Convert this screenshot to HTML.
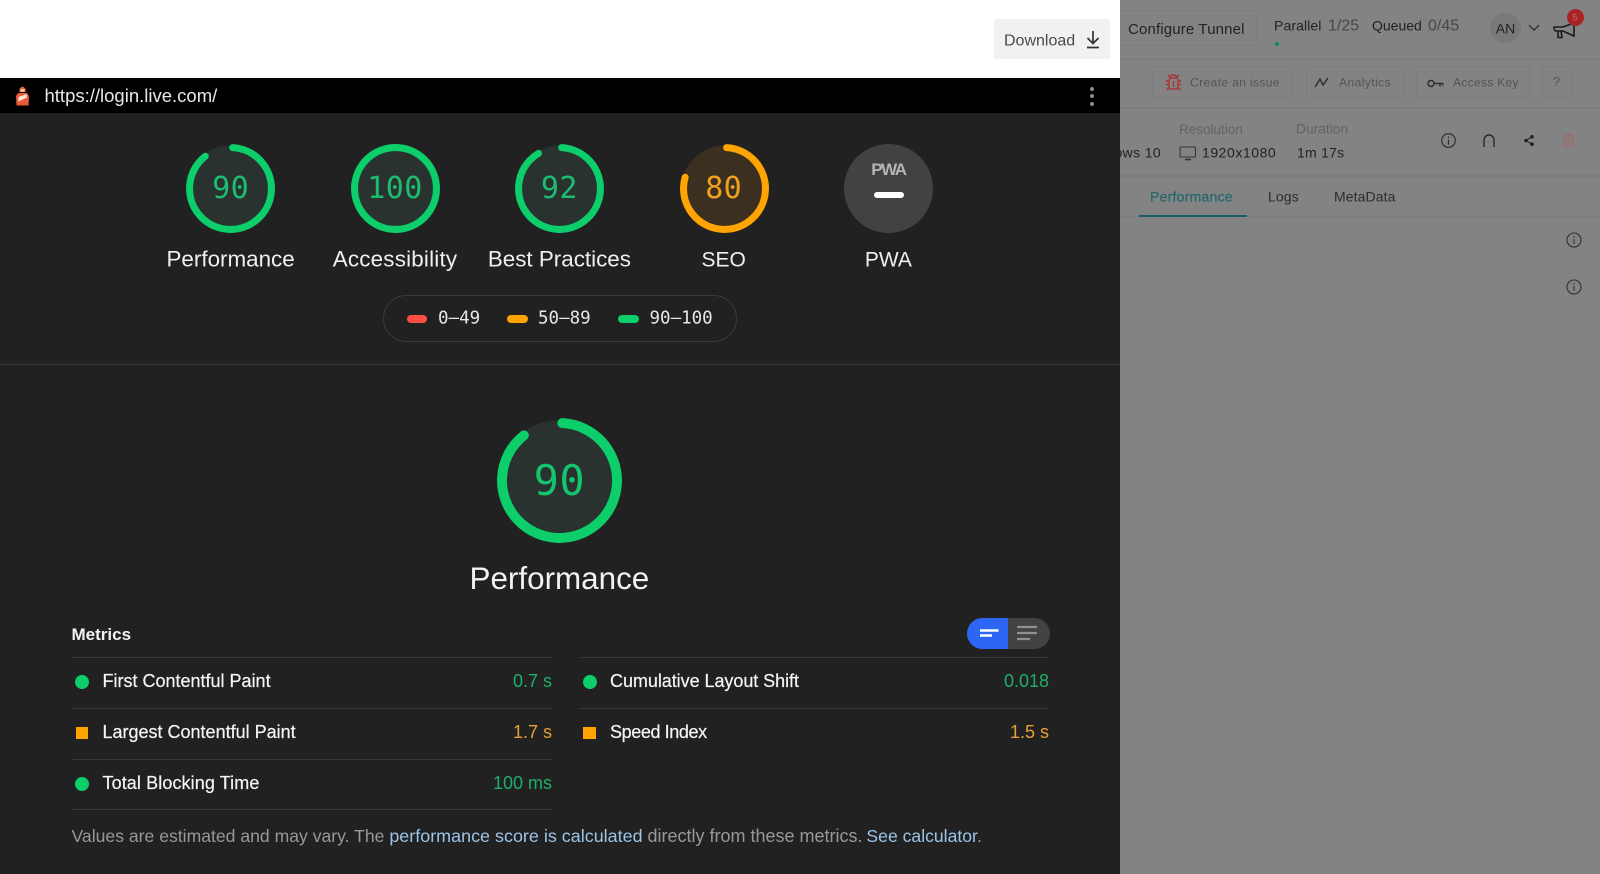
<!DOCTYPE html>
<html lang="en">
<head>
<meta charset="utf-8">
<title>Lighthouse report</title>
<style>
html,body{margin:0;padding:0;width:1600px;height:874px;overflow:hidden;background:#838383}
body{position:relative;font-family:"Liberation Sans",sans-serif}
.t{position:absolute;white-space:nowrap;line-height:1.2;transform:translateY(-50%)}
.c{transform:translate(-50%,-50%)}
.r{transform:translateY(-50%);text-align:right}
.m{font-family:"DejaVu Sans Mono","Liberation Mono",monospace}
.b{position:absolute;box-sizing:border-box}
svg{position:absolute;overflow:visible}
#left{position:absolute;left:0;top:0;width:1120px;height:874px;background:#212121;overflow:hidden}
.lab{font-size:22.4px;color:#f0f0f0}
.gn{font-size:30px;top:189px;letter-spacing:.4px}
.row{font-size:18px;color:#f5f5f5;-webkit-text-stroke:.2px #f5f5f5}
.val{font-size:18px}
.line{position:absolute;height:1px;background:#383838}
.sep{position:absolute;left:1120px;right:0;height:2px;background:#7d7d7d}
.box{position:absolute;box-sizing:border-box;border:1px solid #7c7c7c;border-radius:3px}
.rt{color:#222}
</style>
</head>
<body>

<!-- dimmed right side -->
<div class="sep" style="top:58px"></div>
<div class="sep" style="top:107px"></div>
<div class="sep" style="top:175px"></div>
<div class="sep" style="top:216px;height:1px"></div>
<div class="box" style="left:1110px;top:10px;width:147px;height:36px"></div>
<div class="t rt" style="left:1128px;top:29.500px;font-size:15px;letter-spacing:.15px">Configure Tunnel</div>
<div class="t rt" style="left:1274px;top:26px;font-size:14px;letter-spacing:.1px">Parallel</div>
<div class="t" style="left:1328px;top:25.500px;font-size:16px;color:#484848">1/25</div>
<div class="t rt" style="left:1372px;top:26px;font-size:14px">Queued</div>
<div class="t" style="left:1428px;top:25.500px;font-size:16px;color:#484848">0/45</div>
<div class="b" style="left:1274.500px;top:41.500px;width:4px;height:4px;border-radius:50%;background:#138a5c"></div>
<div class="b" style="left:1490px;top:13px;width:31px;height:30px;border-radius:50%;background:#797979"></div>
<div class="t c rt" style="left:1505.500px;top:29px;font-size:14px">AN</div>
<svg style="left:1528px;top:24px" width="12" height="8" viewBox="0 0 12 8" fill="none" stroke="#262626" stroke-width="1.200"><path d="M1 1.200l5 5 5-5"/></svg>
<svg style="left:1553px;top:22px" width="22" height="17" viewBox="0 0 22 17" fill="none" stroke="#1a1a1a" stroke-width="1.600"><path d="M1 5h9L21 1v13L10 9H3C1.500 9 1 7 1 5zM5 9v6.500h4L8 9"/></svg>
<div class="b" style="left:1567px;top:9px;width:17px;height:17px;border-radius:50%;background:#a92226"></div>
<div class="t c" style="left:1575px;top:17.500px;font-size:9px;color:#c66">5</div>

<div class="box" style="left:1152px;top:66px;width:140px;height:32px"></div>
<svg style="left:1165px;top:74px" width="17" height="17" viewBox="0 0 17 17" fill="none" stroke="#a83434" stroke-width="1.400"><rect x="4" y="4" width="9" height="11" rx="2"/><path d="M5 4a3.500 3 0 0 1 7 0M4 7H1M13 7h3M4 10.500H1M13 10.500h3M4 14l-2.500 2M13 14l2.500 2M8.500 7v6M3 1l2 2M14 1l-2 2"/></svg>
<div class="t" style="left:1190px;top:83px;font-size:12.200px;color:#555;letter-spacing:.3px">Create an issue</div>
<div class="box" style="left:1306px;top:66px;width:98px;height:32px"></div>
<svg style="left:1314px;top:76px" width="16" height="13" viewBox="0 0 16 13" fill="none" stroke="#2c2c2c" stroke-width="1.400"><path d="M1 11l5-8 3 6 5-7"/></svg>
<div class="t" style="left:1339px;top:83px;font-size:12.200px;color:#555;letter-spacing:.35px">Analytics</div>
<div class="box" style="left:1416px;top:66px;width:114px;height:32px"></div>
<svg style="left:1427px;top:78px" width="17" height="11" viewBox="0 0 17 11" fill="none" stroke="#2c2c2c" stroke-width="1.400"><circle cx="4" cy="5.500" r="3"/><path d="M7 5.500h9M13 5.500v3M16 5.500v2"/></svg>
<div class="t" style="left:1453px;top:83px;font-size:12.200px;color:#555;letter-spacing:.2px">Access Key</div>
<div class="box" style="left:1542px;top:66px;width:30px;height:32px"></div>
<div class="t c" style="left:1556.500px;top:82px;font-size:13px;color:#555">?</div>

<div class="t" style="left:1179px;top:130px;font-size:13.500px;color:#636363">Resolution</div>
<div class="t" style="left:1296px;top:130px;font-size:13.800px;color:#636363">Duration</div>
<div class="t rt" style="left:1120px;top:152.500px;font-size:14px;letter-spacing:.35px;width:41px;overflow:hidden;direction:rtl">ows 10</div>
<svg style="left:1179px;top:146px" width="18" height="15" viewBox="0 0 18 15" fill="none" stroke="#363636" stroke-width="1.100"><rect x="1" y="1" width="15.500" height="10" rx="1"/><path d="M6 13.500h6" stroke-width="1.600"/></svg>
<div class="t rt" style="left:1202px;top:152.500px;font-size:14px;letter-spacing:.55px">1920x1080</div>
<div class="t rt" style="left:1297px;top:152.500px;font-size:14px;letter-spacing:.25px">1m 17s</div>
<svg style="left:1441px;top:133px" width="15" height="15" viewBox="0 0 15 15" fill="none" stroke="#2c2c2c" stroke-width="1.100"><circle cx="7.500" cy="7.500" r="6.800"/><path d="M7.500 6.500v5M7.500 3.500v1.500"/></svg>
<svg style="left:1483px;top:134px" width="12" height="13" viewBox="0 0 12 13" fill="none" stroke="#222" stroke-width="1.300"><path d="M1 13V6a5 5 0 0 1 10 0v7"/></svg>
<svg style="left:1524px;top:135px" width="10" height="11" viewBox="0 0 10 11" fill="#222" stroke="#222" stroke-width="1"><circle cx="8" cy="1.800" r="1.300"/><circle cx="2" cy="5.500" r="1.300"/><circle cx="8" cy="9.200" r="1.300"/><path d="M8 1.800L2 5.500l6 3.700" fill="none"/></svg>
<svg style="left:1563px;top:134px" width="12" height="13" viewBox="0 0 12 13" fill="none" stroke="#9c6a6a" stroke-width="1.100"><path d="M0 2h12M4 2V.6h4V2M1.500 2.500V13h9V2.500M4 4.500v6.500M6 4.500v6.500M8 4.500v6.500"/></svg>

<div class="t" style="left:1150px;top:196.500px;font-size:14px;color:#20686b;letter-spacing:.25px;-webkit-text-stroke:.2px #20686b">Performance</div>
<div class="t" style="left:1268px;top:196.500px;font-size:14px;color:#2c2c2c;letter-spacing:.1px">Logs</div>
<div class="t" style="left:1334px;top:196.500px;font-size:14px;color:#2c2c2c;letter-spacing:.1px">MetaData</div>
<div class="b" style="left:1139px;top:215px;width:108px;height:2px;background:#175f64"></div>
<svg style="left:1566px;top:232px" width="16" height="16" viewBox="0 0 16 16" fill="none" stroke="#323232" stroke-width="1.100"><circle cx="8" cy="8" r="7"/><path d="M8 7v5M8 4v1.500"/></svg>
<svg style="left:1566px;top:279px" width="16" height="16" viewBox="0 0 16 16" fill="none" stroke="#323232" stroke-width="1.100"><circle cx="8" cy="8" r="7"/><path d="M8 7v5M8 4v1.500"/></svg>

<!-- left report panel -->
<div id="left">
  <div class="b" style="left:0;top:0;width:1120px;height:77.500px;background:#fff"></div>
  <div class="b" style="left:993.500px;top:19px;width:116.500px;height:40px;background:#f1f1f1;border-radius:2px"></div>
  <div class="t" style="left:1004px;top:41px;font-size:16px;color:#4a4a4a">Download</div>
  <svg style="left:1085px;top:30px" width="16" height="19" viewBox="0 0 16 19" fill="none" stroke="#333" stroke-width="1.700"><path d="M8 1v12.500M2.500 8L8 13.500 13.500 8M2 17.500h12"/></svg>

  <div class="b" style="left:0;top:77.500px;width:1120px;height:35.500px;background:#000"></div>
  <svg style="left:15px;top:86px" width="15" height="20" viewBox="0 0 15 20"><path d="M4.500 3Q7.500-1.500 10.500 3V6H4.500z" fill="#ee6a44"/><rect x="5.500" y="3.500" width="4" height="2" fill="#ffd9c0"/><path d="M3 7h9l2 3-.5 9.500h-12L1 10z" fill="#e95a3a"/><path d="M3.500 11l8-3 .5 3.500-8.500 4z" fill="#fde3d2"/></svg>
  <div class="t" style="left:44.500px;top:96px;font-size:18.500px;color:#e8e8e8">https://login.live.com/</div>
  <div class="b" style="left:1090px;top:86.500px;width:4px;height:4px;border-radius:50%;background:#8c8c8c"></div>
  <div class="b" style="left:1090px;top:94px;width:4px;height:4px;border-radius:50%;background:#8c8c8c"></div>
  <div class="b" style="left:1090px;top:101.500px;width:4px;height:4px;border-radius:50%;background:#8c8c8c"></div>

  <!-- gauges -->
  <svg style="left:186px;top:144px" width="89" height="89" viewBox="0 0 120 120"><circle cx="60" cy="60" r="58" fill="#29322e"/><circle cx="60" cy="60" r="55.200" fill="none" stroke="#0cce6b" stroke-width="9.500" stroke-linecap="round" pathLength="100" stroke-dasharray="88.600 11.400" transform="rotate(-87 60 60)"/></svg>
  <div class="t c m gn" style="left:230.600px;color:#1bbd70">90</div>
  <div class="t c lab" style="left:230.600px;top:260px">Performance</div>

  <svg style="left:350.500px;top:144px" width="89" height="89" viewBox="0 0 120 120"><circle cx="60" cy="60" r="58" fill="#29322e"/><circle cx="60" cy="60" r="55.200" fill="none" stroke="#0cce6b" stroke-width="9.500"/></svg>
  <div class="t c m gn" style="left:395px;color:#1bbd70">100</div>
  <div class="t c lab" style="left:395px;top:260px;letter-spacing:.2px">Accessibility</div>

  <svg style="left:515px;top:144px" width="89" height="89" viewBox="0 0 120 120"><circle cx="60" cy="60" r="58" fill="#29322e"/><circle cx="60" cy="60" r="55.200" fill="none" stroke="#0cce6b" stroke-width="9.500" stroke-linecap="round" pathLength="100" stroke-dasharray="90.600 9.400" transform="rotate(-87 60 60)"/></svg>
  <div class="t c m gn" style="left:559.400px;color:#1bbd70">92</div>
  <div class="t c lab" style="left:559.400px;top:260px">Best Practices</div>

  <svg style="left:679.500px;top:144px" width="89" height="89" viewBox="0 0 120 120"><circle cx="60" cy="60" r="58" fill="#3b3020"/><circle cx="60" cy="60" r="55.200" fill="none" stroke="#ffa400" stroke-width="9.500" stroke-linecap="round" pathLength="100" stroke-dasharray="78.600 21.400" transform="rotate(-87 60 60)"/></svg>
  <div class="t c m gn" style="left:723.700px;color:#f0a11c">80</div>
  <div class="t c lab" style="left:723.700px;top:259.500px;font-size:21px">SEO</div>

  <div class="b" style="left:844px;top:144px;width:89px;height:89px;border-radius:50%;background:#424242"></div>
  <div class="t c" style="left:888.400px;top:170px;font-size:17px;font-weight:bold;color:#b5b5b5;letter-spacing:-1.500px">PWA</div>
  <div class="b" style="left:873.500px;top:191.500px;width:30px;height:6.500px;border-radius:3px;background:#fff"></div>
  <div class="t c lab" style="left:888.400px;top:259.500px;font-size:21px">PWA</div>

  <!-- legend -->
  <div class="b" style="left:383px;top:295px;width:354px;height:47px;border:1px solid #3a3a3a;border-radius:24px"></div>
  <div class="b" style="left:406.500px;top:315px;width:20.500px;height:7.500px;border-radius:4px;background:#ff4e42"></div>
  <div class="t m" style="left:438px;top:319px;font-size:17.500px;color:#e6e6e6">0–49</div>
  <div class="b" style="left:507px;top:315px;width:20.500px;height:7.500px;border-radius:4px;background:#ffa400"></div>
  <div class="t m" style="left:538px;top:319px;font-size:17.500px;color:#e6e6e6">50–89</div>
  <div class="b" style="left:618px;top:315px;width:20.500px;height:7.500px;border-radius:4px;background:#0cce6b"></div>
  <div class="t m" style="left:649.500px;top:319px;font-size:17.500px;color:#e6e6e6">90–100</div>

  <div class="line" style="left:0;top:364px;width:1120px"></div>

  <!-- big gauge -->
  <svg style="left:497px;top:418px" width="125" height="125" viewBox="0 0 120 120"><circle cx="60" cy="60" r="58" fill="#29322e"/><circle cx="60" cy="60" r="55.200" fill="none" stroke="#0cce6b" stroke-width="9.500" stroke-linecap="round" pathLength="100" stroke-dasharray="88.600 11.400" transform="rotate(-87 60 60)"/></svg>
  <div class="t c m" style="left:559.400px;top:481px;font-size:42px;color:#14c56f;letter-spacing:.5px">90</div>
  <div class="t c" style="left:559.400px;top:579px;font-size:31.400px;color:#f2f2f2">Performance</div>

  <!-- metrics -->
  <div class="t" style="left:71.500px;top:635px;font-size:17px;font-weight:bold;color:#f2f2f2">Metrics</div>
  <svg style="left:966.500px;top:617.500px" width="83" height="31" viewBox="0 0 83 31">
    <path d="M41 0H15.500a15.500 15.500 0 0 0 0 31H41z" fill="#2d65f5"/>
    <path d="M41 0h26.500a15.500 15.500 0 0 1 0 31H41z" fill="#424242"/>
    <path d="M13 12.500h18.500M13 17.500h12" stroke="#fff" stroke-width="2.400" fill="none"/>
    <path d="M50 9h20M50 15h20M50 21h13" stroke="#909090" stroke-width="2.200" fill="none"/>
  </svg>

  <div class="line" style="left:71.500px;top:656.500px;width:480.500px"></div>
  <div class="line" style="left:71.500px;top:708px;width:480.500px"></div>
  <div class="line" style="left:71.500px;top:759px;width:480.500px"></div>
  <div class="line" style="left:71.500px;top:808.500px;width:480.500px"></div>
  <div class="line" style="left:580px;top:656.500px;width:469px"></div>
  <div class="line" style="left:580px;top:708px;width:469px"></div>

  <div class="b" style="left:75px;top:674.500px;width:14px;height:14px;border-radius:50%;background:#0cce6b"></div>
  <div class="t row" style="left:102.500px;top:682px">First Contentful Paint</div>
  <div class="t r val" style="right:568px;top:682px;color:#1fae6c">0.7 s</div>

  <div class="b" style="left:75.500px;top:726.500px;width:12px;height:12px;background:#ffa400"></div>
  <div class="t row" style="left:102.500px;top:733px">Largest Contentful Paint</div>
  <div class="t r val" style="right:568px;top:733px;color:#e6a035">1.7 s</div>

  <div class="b" style="left:75px;top:777px;width:14px;height:14px;border-radius:50%;background:#0cce6b"></div>
  <div class="t row" style="left:102.500px;top:784px;letter-spacing:.1px">Total Blocking Time</div>
  <div class="t r val" style="right:568px;top:784px;color:#1fae6c">100 ms</div>

  <div class="b" style="left:583px;top:674.500px;width:14px;height:14px;border-radius:50%;background:#0cce6b"></div>
  <div class="t row" style="left:610px;top:682px;letter-spacing:-.05px">Cumulative Layout Shift</div>
  <div class="t r val" style="right:71px;top:682px;color:#1fae6c">0.018</div>

  <div class="b" style="left:583px;top:726.500px;width:12.500px;height:12px;background:#ffa400"></div>
  <div class="t row" style="left:610px;top:733px;letter-spacing:-.4px">Speed Index</div>
  <div class="t r val" style="right:71px;top:733px;color:#e6a035">1.5 s</div>

  <div class="t" style="left:71.500px;top:837px;font-size:17.600px;color:#989898">Values are estimated and may vary. The <span style="color:#9cc4e8;font-size:17.950px">performance score is calculated</span> <span style="font-size:18px">directly from these metrics.</span> <span style="color:#9cc4e8;font-size:17.600px;margin-left:-1px">See calculator</span>.</div>
</div>
</body>
</html>
